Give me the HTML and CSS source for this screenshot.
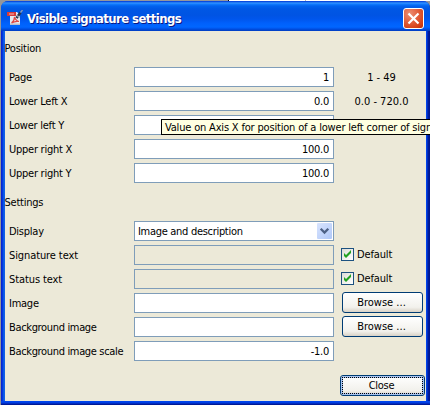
FILE: index.html
```html
<!DOCTYPE html>
<html lang="en">
<head>
<meta charset="utf-8">
<title>Visible signature settings</title>
<link rel="stylesheet" href="styles.css">
</head>
<body>
<div class="desktop-strip"></div>
<main class="window">
  <header class="titlebar">
    <svg class="app-icon" width="16" height="16" viewBox="0 0 16 16">
      <path d="M3 2h7l3 3v10H3z" fill="#e9e9ee"/>
      <path d="M3 13.500h10V15H3z" fill="#b9bdc9"/>
      <path d="M0 2h9v4H0z" fill="#d93a38"/>
      <path d="M2 4h5" stroke="#f6b9b5"/>
      <path d="M4.500 13c2-1.500 3-4 3-6 1 3 2 4 4.500 4.500-3-.5-5 0-7.500 1.500" fill="none" stroke="#df4a45" stroke-width="1.200"/>
      <path d="M9.500 8l4-5.500" stroke="#28364f" stroke-width="2.600"/>
      <path d="M10 5.500l2.500 2" stroke="#9aa7b8" stroke-width="1.200"/>
      <path d="M13.500 2.500L15.500 0" stroke="#8b9bb0" stroke-width="1.300"/>
    </svg>
    <h1 class="title">Visible signature settings</h1>
    <button class="close-x" aria-label="Close window">
      <svg width="19" height="19" viewBox="0 0 19 19"><path d="M4.500 4.500l10 10M14.500 4.500l-10 10" stroke="#fff" stroke-width="2.200"/></svg>
    </button>
  </header>
  <div class="content">
    <h2 class="heading">Position</h2>
    <section class="rows">
      <div class="row"><span>Page</span><div class="field num">1</div><span class="range">1 - 49</span></div>
      <div class="row"><span>Lower Left X</span><div class="field num">0.0</div><span class="range">0.0 - 720.0</span></div>
      <div class="row"><span>Lower left Y</span><div class="field num"></div></div>
      <div class="row"><span>Upper right X</span><div class="field num">100.0</div></div>
      <div class="row"><span>Upper right Y</span><div class="field num">100.0</div></div>
    </section>
    <h2 class="heading second">Settings</h2>
    <section class="rows">
      <div class="row"><span>Display</span><div class="field select"><span>Image and description</span>
        <i class="arrow"><svg width="15" height="16" viewBox="0 0 15 16"><path d="M3.700 5.700l3.800 3.800 3.800-3.800" fill="none" stroke="#4d6185" stroke-width="2.300"/></svg></i></div></div>
      <div class="row"><span class="loose">Signature text</span><div class="field disabled"></div>
        <label class="check"><svg width="13" height="13" viewBox="0 0 11 11"><path d="M2 4v3l2 2 5-5V1L4 6z" fill="#21a121"/></svg>Default</label></div>
      <div class="row"><span class="loose">Status text</span><div class="field disabled"></div>
        <label class="check"><svg width="13" height="13" viewBox="0 0 11 11"><path d="M2 4v3l2 2 5-5V1L4 6z" fill="#21a121"/></svg>Default</label></div>
      <div class="row"><span>Image</span><div class="field"></div><button class="btn">Browse ...</button></div>
      <div class="row"><span class="tight">Background image</span><div class="field"></div><button class="btn">Browse ...</button></div>
      <div class="row"><span class="tight">Background image scale</span><div class="field num">-1.0</div></div>
    </section>
    <footer class="footer"><button class="btn close">Close</button></footer>
  </div>
</main>
<div class="tooltip">Value on Axis X for position of a lower left corner of sign</div>
</body>
</html>
```

FILE: styles.css
```css
* { box-sizing: border-box; }
body {
  margin: 0; width: 430px; height: 405px; overflow: hidden; position: relative;
  padding: 1px 0 0 1px;
  background: #96979b;
  font: 11px/22px "DejaVu Sans Condensed", "DejaVu Sans", sans-serif;
  letter-spacing: -0.25px; color: #000; white-space: nowrap;
}
.desktop-strip {
  position: absolute; left: 228px; top: 0; right: 0; height: 1px;
  background: linear-gradient(90deg, #111 1px, #fff 1px 77px, #b7b7b7 77px 78px, #fff 78px);
}
.window {
  position: relative; width: 429px; height: 404px; overflow: hidden;
  border-radius: 7px 7px 0 0;
  background: linear-gradient(90deg, #0019cf 0, #0831d9 1px, #0040e0 2px, #166aee 3px, #0855dd 4px, #0855dd 424px, #0048f1 425px, #003be0 426px, #001ea0 427px, #00138c 429px);
}
.titlebar {
  height: 30px; padding: 0 6px; display: flex; align-items: center;
  background: linear-gradient(#0831d9 0, #0b63e5 1px, #3a93ff 2px, #127dff 3px, #0262ee 5px, #0057e5 8px, #0054e3 14px, #0056ec 18px, #0060fb 22px, #0066ff 26px, #005bf4 27px, #0044d0 29px, #003dc2 30px);
}
.app-icon { flex: none; margin-top: 4px; }
.title {
  margin: 5px 0 0 4px; font: bold 13px/20px "DejaVu Sans Condensed", "DejaVu Sans", sans-serif;
  letter-spacing: -0.58px; color: #fff; text-shadow: 1px 1px 0 #0a1883;
}
.close-x {
  margin: 4px 0 0 auto; padding: 0; width: 21px; height: 21px;
  border: 1px solid #fff; border-radius: 3px;
  background: radial-gradient(circle at 30% 25%, #ec8f74 0, #e25e3b 45%, #d33e14 80%, #b32d08 100%);
}
.close-x svg { display: block; }
.content {
  margin-left: 4px; width: 421px; height: 370px; background: #ece9d8;
  padding-top: 7px; display: flex; flex-direction: column;
}
.window::after {
  content: ""; position: absolute; left: 0; right: 0; bottom: 0; height: 4px;
  background: linear-gradient(#0048f1 0, #003be0 2px, #001ea0 3px, #00138c 4px);
}
.heading { margin: 0 0 9px -0.5px; font: inherit; height: 20px; }
.heading.second { margin-top: 9px; }
.rows { display: grid; row-gap: 4px; padding-left: 4px; }
.row { height: 20px; display: grid; grid-template-columns: 125px 200px 81px; }
.row > :nth-child(3) { margin-left: 8px; }
.loose { letter-spacing: -0.1px; }
.tight { letter-spacing: -0.34px; }
.field { height: 20px; border: 1px solid #7f9db9; background: #fff; line-height: 20px; padding: 0 4px 0 3px; }
.num { text-align: right; }
.disabled { background: #ece9d8; }
.range { width: 79px; text-align: center; letter-spacing: 0; }
.select { display: flex; justify-content: space-between; padding: 1px; line-height: 18px; letter-spacing: -0.3px; }
.select > span { padding-left: 2px; }
.arrow { width: 15px; height: 16px; border-radius: 1px; background: linear-gradient(135deg, #d8e4fe, #b0c8f8); }
.arrow svg { display: block; }
.check { display: flex; gap: 3px; line-height: 20px; letter-spacing: -0.15px; }
.row > .check { margin-left: 7px; }
.check svg { border: 1px solid #1c5180; background: linear-gradient(135deg, #dcdcd7, #fff); margin-top: 3px; padding: 0; }
.btn {
  width: 81px; height: 21px; margin-top: -1px; padding: 0 2px 0 0; font: inherit; line-height: 19px; letter-spacing: 0;
  color: #000; border: 1px solid #003c74; border-radius: 3px;
  background: linear-gradient(#fff, #f2f1ec 75%, #d8d2c6);
}
.footer { display: flex; justify-content: flex-end; padding: 14px 1px 0 0; }
.close { width: 85px; margin: 0; position: relative; line-height: 17px; letter-spacing: -0.25px; box-shadow: inset 0 0 0 2px #a9c4ef; }
.close::after { content: ""; position: absolute; inset: 1px; border: 1px dotted #000; }
.tooltip {
  position: absolute; left: 161px; top: 119px; width: 269px; height: 16px; padding-left: 3px;
  border: solid #000; border-width: 1px 0; border-left-width: 1px; background: #ffffe1; line-height: 16px;
  letter-spacing: -0.18px; overflow: hidden;
}
```
